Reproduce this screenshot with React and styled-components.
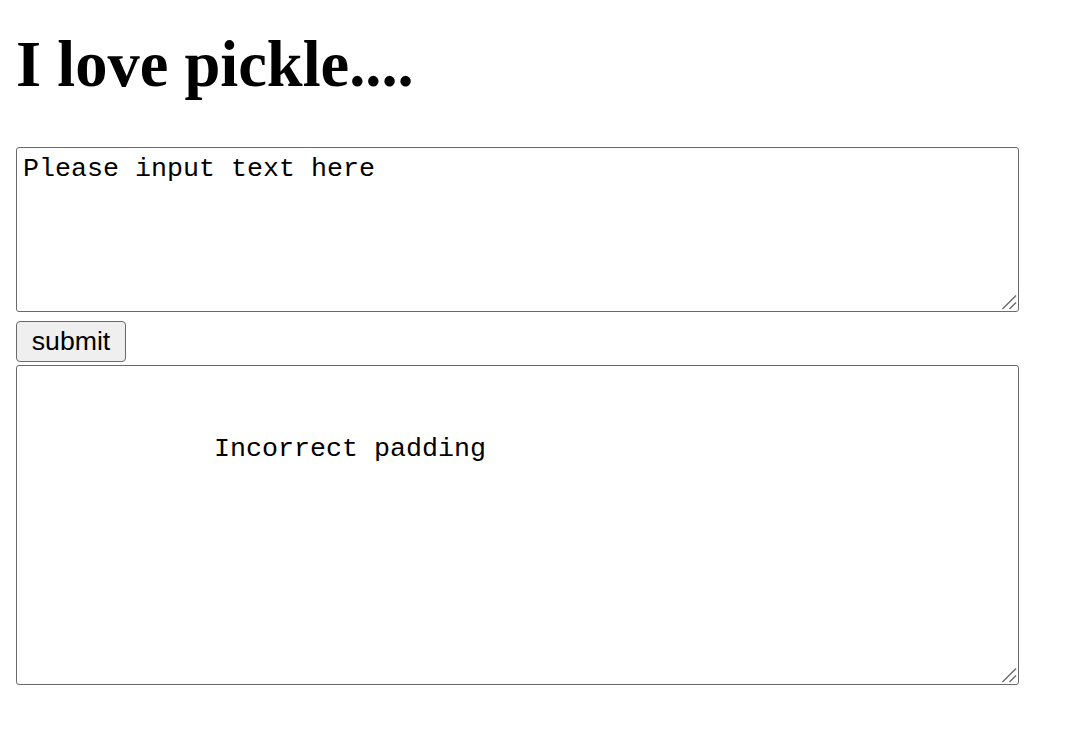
import React from 'react'
import styled, { createGlobalStyle } from 'styled-components'

const GlobalStyle = createGlobalStyle`
	body {
		margin: 0;
		background: #ffffff;
		font-family: "Liberation Serif", serif;
	}
`

const Page = styled.div`
	display: flex;
	flex-direction: column;
	align-items: flex-start;
	padding: 28px 16px 0;
`

const Title = styled.h1`
	margin: 0 0 45px;
	font-family: "Liberation Serif", "Times New Roman", serif;
	font-size: 64.5px;
	line-height: 74px;
	font-weight: bold;
	color: #000;
`

const Field = styled.div`
	position: relative;
	display: flex;
`

const TextBox = styled.textarea`
	box-sizing: border-box;
	width: 1003px;
	height: ${props => props.$height}px;
	margin: 0;
	padding: ${props => props.$padding};
	border: 1px solid #6a6a6a;
	border-radius: 3px;
	background: #fff;
	color: #000;
	font-family: "Liberation Mono", "Courier New", monospace;
	font-size: 26.67px;
	line-height: 30px;
	outline: none;
	resize: none;
`

// the resize grip in the corner
const Grip = styled.svg`
	position: absolute;
	right: 2px;
	bottom: 2px;
	width: 16px;
	height: 16px;
	pointer-events: none;
`

const SubmitButton = styled.button`
	box-sizing: border-box;
	width: 110px;
	height: 41px;
	margin: 9px 0 3px;
	padding: 0;
	border: 1px solid #6a6a6a;
	border-radius: 4px;
	background: #efefef;
	color: #000;
	font-family: "Liberation Sans", Arial, sans-serif;
	font-size: 26.67px;
`

function Area({ height, padding, value }) {
	return (
		<Field>
			<TextBox $height={height} $padding={padding} defaultValue={value} />
			<Grip viewBox="0 0 16 16">
				<path d="M1.5 15 L15 1.5" stroke="#6a6a6a" strokeWidth="1.4" />
				<path d="M8.5 15 L15 8.5" stroke="#6a6a6a" strokeWidth="1.4" />
			</Grip>
		</Field>
	)
}

export default function App() {
	return (
		<Page>
			<GlobalStyle />
			<Title>I love pickle....</Title>
			<Area height={165} padding="6px 6px" value="Please input text here" />
			<SubmitButton>submit</SubmitButton>
			<Area height={320} padding="68px 197px" value="Incorrect padding" />
		</Page>
	)
}
